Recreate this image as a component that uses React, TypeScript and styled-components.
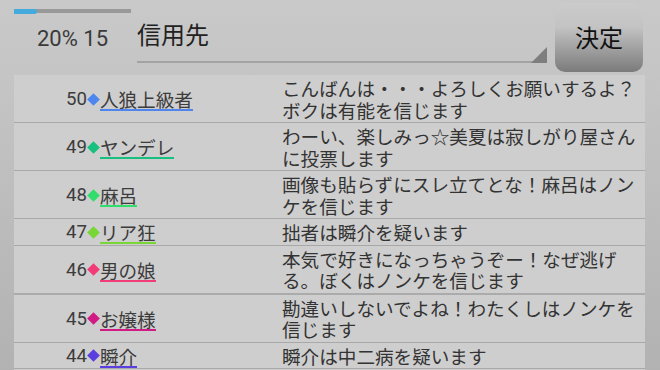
import React from "react";
import styled, { createGlobalStyle } from "styled-components";

const Global = createGlobalStyle`
  html, body {
    margin: 0;
    padding: 0;
    width: 660px;
    height: 370px;
    overflow: hidden;
  }
  body {
    background: linear-gradient(to bottom, #c9c9c9 0%, #c5c5c5 20%, #b2b2b2 100%);
    font-family: Roboto, "Noto Sans CJK JP", sans-serif;
    color: #333;
  }
`;

const Page = styled.div`
  display: flex;
  flex-direction: column;
  width: 660px;
  height: 370px;
`;

const Header = styled.div`
  display: flex;
  height: 75px;
  flex-shrink: 0;
`;

const Progress = styled.div`
  display: flex;
  flex-direction: column;
  align-items: center;
  width: 117px;
  margin-left: 14px;
`;

const Track = styled.div`
  display: flex;
  align-items: center;
  width: 100%;
  height: 4px;
  margin-top: 9px;
  background: #999999;
`;

const Fill = styled.div<{ $pct: number }>`
  height: 5px;
  width: ${(p) => p.$pct}%;
  background: #45abdf;
  border-radius: 0 3px 3px 0;
`;

const Stats = styled.div`
  margin-top: 13px;
  font-family: Roboto, sans-serif;
  font-size: 22px;
  line-height: 26px;
  color: #3a3a3a;
  white-space: nowrap;
`;

const Spinner = styled.div`
  position: relative;
  flex: 1;
  height: 61px;
  margin-left: 6px;
  margin-right: 8px;
  padding-top: 19px;
  box-sizing: border-box;
  height: 63px;
  border-bottom: 2px solid #a3a3a3;
  font-family: "Noto Sans CJK JP", sans-serif;
  font-size: 24px;
  line-height: 30px;
  color: #222;

  &::after {
    content: "";
    position: absolute;
    right: 0;
    bottom: -2px;
    width: 0;
    height: 0;
    border-style: solid;
    border-width: 0 0 16px 16px;
    border-color: transparent transparent #7e7e7e transparent;
  }
`;

const Button = styled.button`
  width: 88px;
  height: 69px;
  margin-top: 3px;
  margin-right: 17px;
  border: none;
  border-radius: 10px;
  background: linear-gradient(to bottom, #cbcbcb 0%, #c3c3c3 35%, #7b7b7b 100%);
  font-family: "Noto Sans CJK JP", sans-serif;
  font-size: 24px;
  line-height: 30px;
  color: #111;
  padding: 0;
  padding-bottom: 1px;
`;

const Panel = styled.div`
  flex: 1;
  margin: 0 15px 0 14px;
  background: #cecece;
  overflow: hidden;
`;

const Row = styled.div<{ $thick?: boolean }>`
  display: grid;
  grid-template-columns: 268px 1fr;
  border-bottom: ${(p) => (p.$thick ? "2px solid #ababab" : "1px solid #a8a8a8")};
`;

const NameCell = styled.div`
  display: flex;
  align-items: center;
  padding-left: 52px;
`;

const NameGroup = styled.div`
  display: flex;
  align-items: flex-start;
  margin-top: 3px;
  line-height: 20px;
  font-size: 18.6px;
  color: #3c3c3c;
`;

const Num = styled.span`
  font-family: Roboto, sans-serif;
`;

const DiamondSlot = styled.span`
  display: flex;
  align-items: center;
  justify-content: center;
  width: 13px;
  height: 20px;
`;

const Diamond = styled.span<{ $color: string }>`
  width: 9px;
  height: 9px;
  background: ${(p) => p.$color};
  transform: rotate(45deg);
`;

const Name = styled.span<{ $color: string }>`
  font-family: "Noto Sans CJK JP", sans-serif;
  border-bottom: 2px solid ${(p) => p.$color};
`;

const Message = styled.div`
  padding: 2px 0;
  font-family: "Noto Sans CJK JP", sans-serif;
  font-size: 18.6px;
  line-height: 21.5px;
  color: #333;
  white-space: nowrap;
`;

type Post = {
  no: number;
  name: string;
  color: string;
  lines: string[];
  thick?: boolean;
};

const posts: Post[] = [
  {
    no: 50,
    name: "人狼上級者",
    color: "#4e85ef",
    lines: ["こんばんは・・・よろしくお願いするよ？", "ボクは有能を信じます"],
  },
  {
    no: 49,
    name: "ヤンデレ",
    color: "#17c07e",
    lines: ["わーい、楽しみっ☆美夏は寂しがり屋さん", "に投票します"],
  },
  {
    no: 48,
    name: "麻呂",
    color: "#30de6c",
    lines: ["画像も貼らずにスレ立てとな！麻呂はノン", "ケを信じます"],
  },
  {
    no: 47,
    name: "リア狂",
    color: "#78d637",
    lines: ["拙者は瞬介を疑います"],
  },
  {
    no: 46,
    name: "男の娘",
    color: "#f23c78",
    lines: ["本気で好きになっちゃうぞー！なぜ逃げ", "る。ぼくはノンケを信じます"],
    thick: true,
  },
  {
    no: 45,
    name: "お嬢様",
    color: "#d21a85",
    lines: ["勘違いしないでよね！わたくしはノンケを", "信じます"],
  },
  {
    no: 44,
    name: "瞬介",
    color: "#5a3edf",
    lines: ["瞬介は中二病を疑います"],
  },
];

export default function App() {
  const pct = 20;
  return (
    <>
      <Global />
      <Page>
        <Header>
          <Progress>
            <Track>
              <Fill $pct={pct} />
            </Track>
            <Stats>{pct}% 15</Stats>
          </Progress>
          <Spinner>信用先</Spinner>
          <Button>決定</Button>
        </Header>
        <Panel>
          {posts.map((p) => (
            <Row key={p.no} $thick={p.thick}>
              <NameCell>
                <NameGroup>
                  <Num>{p.no}</Num>
                  <DiamondSlot>
                    <Diamond $color={p.color} />
                  </DiamondSlot>
                  <Name $color={p.color}>{p.name}</Name>
                </NameGroup>
              </NameCell>
              <Message>
                {p.lines.map((l, i) => (
                  <React.Fragment key={i}>
                    {i > 0 && <br />}
                    {l}
                  </React.Fragment>
                ))}
              </Message>
            </Row>
          ))}
        </Panel>
      </Page>
    </>
  );
}
